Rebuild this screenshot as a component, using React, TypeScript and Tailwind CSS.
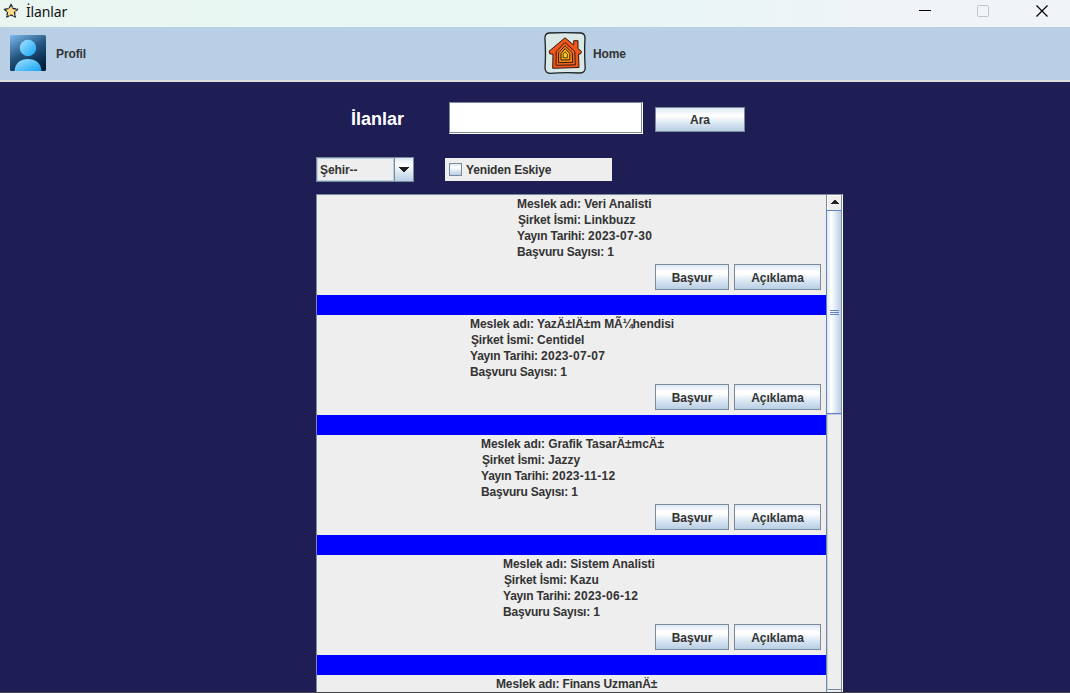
import React from "react";

type Job = { title: string; pad: string; details?: { company: string; date: string; count: number } };

const jobs: Job[] = [
  { title: "Veri Analisti", pad: "pl-[200px]", details: { company: "Linkbuzz", date: "2023-07-30", count: 1 } },
  { title: "YazÄ±lÄ±m MÃ¼hendisi", pad: "pl-[153px]", details: { company: "Centidel", date: "2023-07-07", count: 1 } },
  { title: "Grafik TasarÄ±mcÄ±", pad: "pl-[164px]", details: { company: "Jazzy", date: "2023-11-12", count: 1 } },
  { title: "Sistem Analisti", pad: "pl-[186px]", details: { company: "Kazu", date: "2023-06-12", count: 1 } },
  { title: "Finans UzmanÄ±", pad: "pl-[179px]" },
];

function MetalButton({ className, children }: { className: string; children: React.ReactNode }) {
  return (
    <button
      className={`flex shrink-0 items-center justify-center border border-[#7a8a99] bg-[linear-gradient(to_bottom,#dde8f3_0%,#ffffff_30%,#ffffff_36%,#dde8f3_62%,#b8cfe5_100%)] ${className}`}
    >
      {children}
    </button>
  );
}

function StarIcon() {
  return (
    <svg width="16" height="16" viewBox="0 0 16 16" className="shrink-0">
      <path
        d="M8 1.3 L10 5.5 L14.6 6.200 L11.500 9.400 L12.300 14 L8 12 L3.700 14 L4.500 9.400 L1.400 6.200 L6 5.500 Z"
        fill="#ffdc7c"
        stroke="#1f2340"
        strokeWidth="1.3"
        strokeLinejoin="round"
        strokeDasharray="3.600 .6"
      />
    </svg>
  );
}

function ProfileIcon() {
  return (
    <svg width="36" height="36" viewBox="0 0 36 36" className="shrink-0">
      <defs>
        <linearGradient id="pbg" x1="0.1" y1="0" x2="0.65" y2="1">
          <stop offset="0" stopColor="#78b2e6" />
          <stop offset=".5" stopColor="#245681" />
          <stop offset="1" stopColor="#021f3d" />
        </linearGradient>
        <linearGradient id="pfg" x1="0" y1="0" x2="1" y2="1">
          <stop offset="0" stopColor="#a6e2ff" />
          <stop offset="1" stopColor="#12a4f4" />
        </linearGradient>
        <clipPath id="pclip">
          <rect width="36" height="36" rx="1.5" />
        </clipPath>
      </defs>
      <g clipPath="url(#pclip)">
        <rect width="36" height="36" fill="url(#pbg)" />
        <circle cx="18" cy="13" r="8.2" fill="url(#pfg)" />
        <path d="M4.500 36 C5 28 10.500 24 18 24 S31 28 31.500 36 Z" fill="url(#pfg)" />
      </g>
    </svg>
  );
}

function HomeIcon() {
  return (
    <svg width="42" height="42" viewBox="0 0 42 42" className="shrink-0">
      <path
        d="M5 1 Q20 .3 37 1 Q41 1.500 41 6 Q40.200 20 41.200 36 Q41 41 36 41 Q21 40.200 6 41.300 Q1.200 41 1 36 Q2 20 .9 6 Q1 1.500 5 1 Z"
        fill="#dae8e6"
        stroke="#1b2228"
        strokeWidth="1.3"
      />
      <g stroke="#30180f" strokeLinejoin="round" strokeWidth="1">
        <path d="M21 5.800 L29.700 13 V8.700 H34 V16.500 L37.500 19.500 L36.500 22 H34.500 L35 35.500 L8.700 36.300 L9 22 H6 L5 19.300 Z" fill="#f1571b" />
        <path d="M21 10.500 L30.800 19.500 L31.300 32.800 L12 33.300 L12.200 19.500 Z" fill="#f8661e" />
        <path d="M21 13.800 L28.300 20.800 L28.600 30.300 L14.600 30.700 V20.800 Z" fill="#fb8b19" />
        <path d="M21 16.600 L25.800 21.500 V27.800 L17 28.100 V21.500 Z" fill="#fdb51b" />
        <path d="M19.200 25.800 V22 L21 19.800 L23.300 22 V25.800 Z" fill="#ffd21c" strokeWidth=".8" />
      </g>
    </svg>
  );
}

function TitleBar() {
  return (
    <header className="flex h-[27px] shrink-0 bg-[linear-gradient(to_right,#eaf5f0_0%,#e8f7f3_25%,#e8f6f4_55%,#f0f3f8_88%,#f0f3f8_100%)] pl-[3px] pt-[3px]">
      <StarIcon />
      <span className="ml-[7px] -mt-px font-['Noto_Sans',sans-serif] text-[14px] leading-[20px] font-normal tracking-[-0.15px] text-[#111]">İlanlar</span>
      <svg width="132" height="16" viewBox="0 0 132 16" className="ml-auto mr-[20px]">
        <path d="M1 7.500 H13" stroke="#000" />
        <rect x="59.500" y="2.500" width="11" height="11" rx="1" fill="none" stroke="#c2c4c9" />
        <path d="M118.500 2.500 L129.500 13.500 M129.500 2.500 L118.500 13.500" stroke="#000" strokeWidth="1.2" />
      </svg>
    </header>
  );
}

function JobCard({ job }: { job: Job }) {
  if (!job.details) {
    return (
      <article className={`h-[17px] shrink-0 whitespace-nowrap bg-[#eeeeee] pt-px leading-[16px] tracking-[-0.13px] ${job.pad}`}>
        <p>Meslek adı: {job.title}</p>
      </article>
    );
  }
  return (
    <article className="h-[120px] shrink-0 border-b-[20px] border-[#0000ff] bg-[#eeeeee]">
      <div className={`h-[69px] whitespace-nowrap pt-px leading-[16px] ${job.pad}`}>
        <p className="tracking-[-0.07px]">Meslek adı: {job.title}</p>
        <p className="pl-px">
          <span className="tracking-[-0.15px]">Şirket İsmi: </span>
          {job.details.company}
        </p>
        <p>
          <span className="tracking-[-0.2px]">Yayın Tarihi: </span>
          <span className="tracking-[0.27px]">{job.details.date}</span>
        </p>
        <p className="tracking-[-0.2px]">Başvuru Sayısı: {job.details.count}</p>
      </div>
      <div className="flex justify-end gap-[5px] pr-[5px]">
        <MetalButton className="h-[26px] w-[74px] pt-[2px]">Başvur</MetalButton>
        <MetalButton className="h-[26px] w-[87px] pt-[2px]">Açıklama</MetalButton>
      </div>
    </article>
  );
}

function ScrollBar() {
  return (
    <div className="flex w-[16px] shrink-0 flex-col border-x border-[#7a8a99] bg-[#eeeeee]">
      <div className="flex h-[15px] shrink-0 items-start justify-center border-t border-l border-white pt-[4px]">
        <svg width="8" height="4" viewBox="0 0 8 4" shapeRendering="crispEdges">
          <path d="M3 0h2v1h1v1h1v1h1v1H0V3h1V2h1V1h1z" fill="#222" />
        </svg>
      </div>
      <div className="-ml-px flex h-[204px] w-[16px] shrink-0 flex-col items-center justify-center gap-px border border-[#6382bf] border-r-[#7a8a99] bg-[linear-gradient(to_right,#dde8f3_0%,#ffffff_30%,#dde8f3_62%,#b8cfe5_100%)]">
        <i className="h-px w-[9px] bg-[#6382bf]" />
        <i className="h-px w-[9px] bg-[#6382bf]" />
        <i className="h-px w-[9px] bg-[#6382bf]" />
      </div>
      <div className="h-[276px] shrink-0 border-t border-l border-t-[#b8cfe5] border-l-[#b8cfe5] border-b border-b-[#7a8a99]" />
    </div>
  );
}

export default function App() {
  return (
    <div className="flex h-[693px] w-[1070px] flex-col overflow-hidden border-b border-[#44444a] bg-[#1e1e55] font-['Liberation_Sans',Arial,sans-serif] text-[12px] font-bold text-[#333333]">
      <TitleBar />
      <nav className="flex h-[55px] shrink-0 items-center border-b-2 border-[#dededf] bg-[#b8cfe5] pb-px pl-[10px]">
        <div className="flex w-[534px] items-center gap-[10px]">
          <ProfileIcon />
          <span className="pt-px tracking-[-0.1px]">Profil</span>
        </div>
        <div className="flex items-center gap-[7px]">
          <HomeIcon />
          <span className="pt-px tracking-[-0.1px]">Home</span>
        </div>
      </nav>
      <main className="flex min-h-0 flex-1 flex-col pl-[316px] pt-[20px]">
        <div className="flex h-[32px] shrink-0 items-center pl-[35px]">
          <h1 className="w-[98px] pt-[2px] text-[18px] leading-[32px] text-white">İlanlar</h1>
          <div className="h-[32px] w-[194px] border border-white border-t-[#7a8a99] border-l-[#7a8a99]">
            <input aria-label="Ara" className="block h-full w-full border-r border-b border-[#7a8a99] bg-white px-1 outline-none" />
          </div>
          <MetalButton className="mt-[3px] ml-[12px] h-[25px] w-[90px]">Ara</MetalButton>
        </div>
        <div className="mt-[23px] flex h-[25px] shrink-0 items-center">
          <div className="flex h-[25px] w-[98px] border border-[#7a8a99] bg-[#eeeeee]">
            <span className="w-[77px] border border-[#b8cfe5] pl-[2px] leading-[23px] tracking-[-0.1px]">Şehir--</span>
            <span className="flex flex-1 items-center justify-center border-l border-[#7a8a99] bg-[linear-gradient(to_bottom,#dde8f3_0%,#ffffff_30%,#dde8f3_62%,#b8cfe5_100%)]">
              <svg width="10" height="5" viewBox="0 0 10 5" shapeRendering="crispEdges">
                <path d="M0 0h10v1H9v1H8v1H7v1H6v1H4V4H3V3H2V2H1V1H0z" fill="#222" />
              </svg>
            </span>
          </div>
          <label className="ml-[31px] flex h-[23px] w-[167px] items-center gap-[4px] bg-[#eeeeee] pl-[4px] tracking-[-0.15px]">
            <span className="h-[13px] w-[13px] border border-[#7a8a99] bg-[linear-gradient(to_bottom,#dde8f3_0%,#ffffff_30%,#dde8f3_62%,#b8cfe5_100%)]" />
            Yeniden Eskiye
          </label>
        </div>
        <section className="mt-[12px] flex min-h-0 w-[527px] flex-1 overflow-hidden border-t border-l border-r border-[#7a8a99] border-r-white">
          <div className="flex w-[509px] shrink-0 flex-col overflow-hidden">
            {jobs.map((job) => (
              <JobCard key={job.title} job={job} />
            ))}
          </div>
          <ScrollBar />
        </section>
      </main>
    </div>
  );
}
